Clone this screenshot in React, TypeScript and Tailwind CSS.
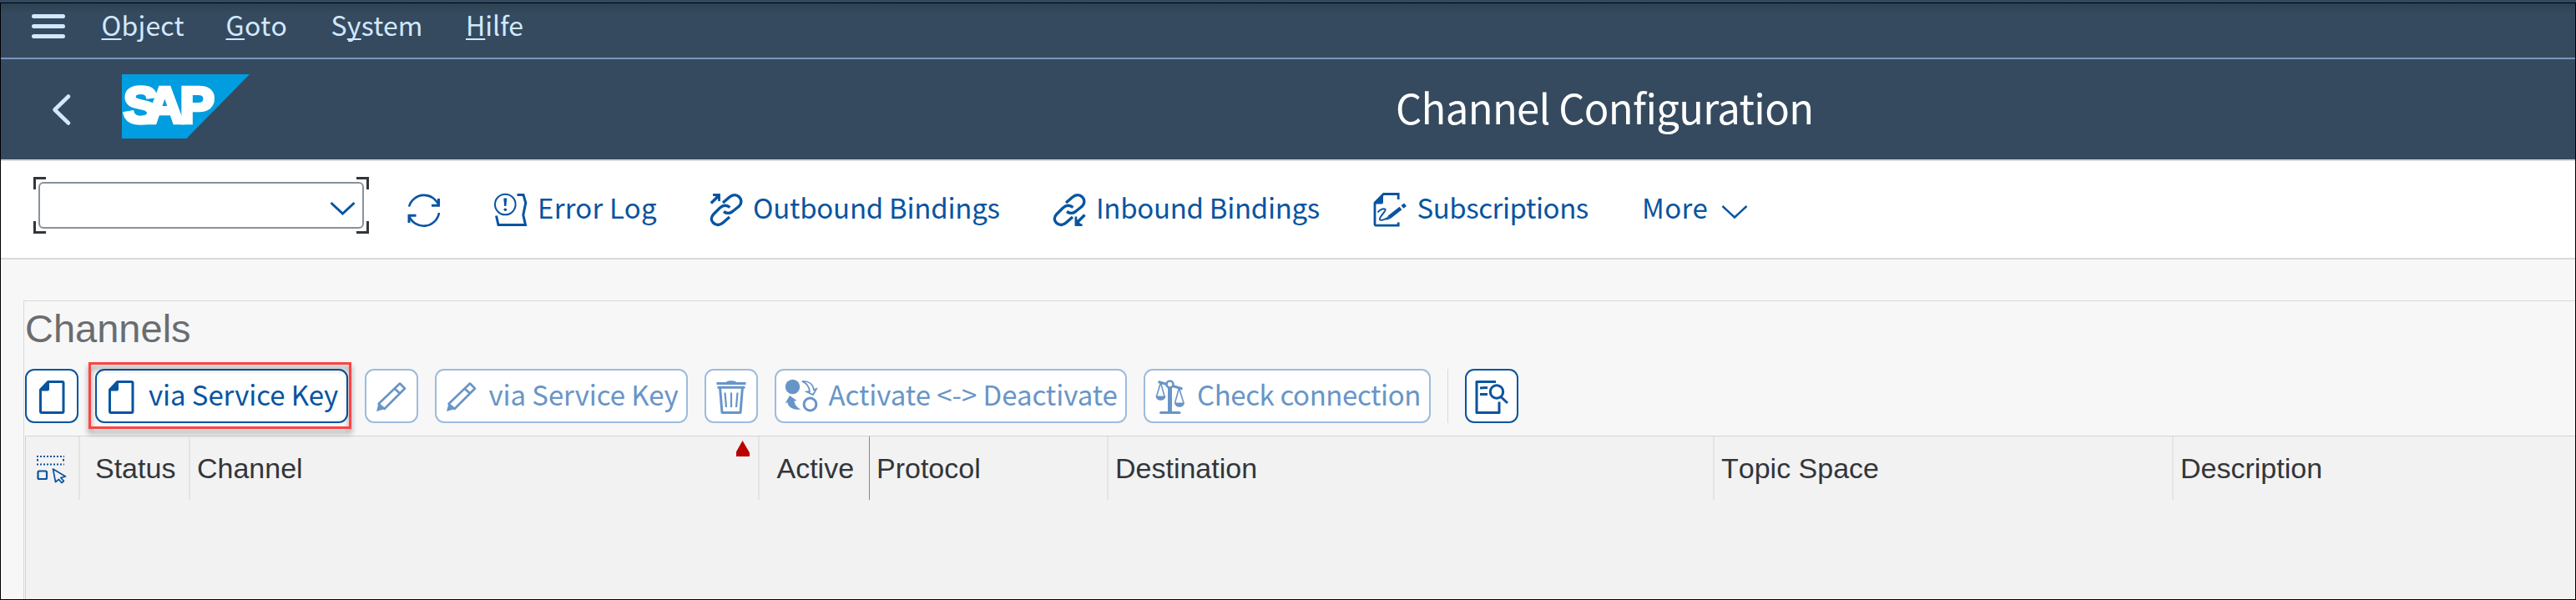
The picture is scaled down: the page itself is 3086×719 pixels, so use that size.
import React from "react";

type Frame = [number, number, number, number];

/* Line drawing on the window's own coordinate grid; `frame` is x, y, width, height. */
function Icon({ frame, children, className = "" }: { frame: Frame; children: React.ReactNode; className?: string }) {
  return (
    <svg
      className={`block shrink-0 ${className}`}
      width={frame[2]}
      height={frame[3]}
      viewBox={frame.join(" ")}
      fill="none"
      stroke="currentColor"
      strokeWidth={3}
    >
      {children}
    </svg>
  );
}

function Menu({ before = "", hot, after, className }: { before?: string; hot: string; after: string; className: string }) {
  return (
    <div className={`h-[50px] shrink-0 whitespace-pre text-[32px] leading-[50px] text-[#d1e8ff] ${className}`}>
      {before}
      <span className="underline decoration-2 underline-offset-[3px] [text-decoration-skip-ink:none]">{hot}</span>
      {after}
    </div>
  );
}

function ToolButton({
  children,
  label,
  className = "",
  dim = false,
  labelClass = "",
}: {
  children: React.ReactNode;
  label?: string;
  className?: string;
  dim?: boolean;
  labelClass?: string;
}) {
  return (
    <button
      className={`relative flex h-[65px] shrink-0 items-center rounded-[11px] border-2 bg-white text-left ${
        dim ? "border-[#9dbcdc] text-[#6895c7]" : "border-[#0854a0] text-[#0854a0]"
      } ${className}`}
    >
      {children}
      {label && (
        <span className={`whitespace-nowrap pb-[5px] text-[33px] leading-[50px] ${labelClass}`}>{label}</span>
      )}
    </button>
  );
}

function Sheet() {
  return (
    <g>
      <path d="M57.5 457.5H74.5Q76 457.5 76 459V493Q76 494.5 74.5 494.5H50Q48.5 494.5 48.5 493V467Z" strokeLinejoin="round" />
      <path d="M47.5 468.5L59 456.5V466.5Q59 468.5 57 468.5Z" fill="currentColor" stroke="none" />
    </g>
  );
}

function Pencil() {
  return (
    <g strokeWidth={2.6}>
      <path d="M479 459.5L485 465.5L460.5 490L453.5 484Z" strokeLinejoin="round" />
      <path d="M472.5 465.5L479 471.5" />
      <path d="M453.5 483.5L461 490L451 493Z" fill="currentColor" stroke="none" />
    </g>
  );
}

function Chain() {
  return (
    <g strokeWidth={3.4}>
      <path d="M1277 243L1284.5 236.5C1289 232.5 1293.5 233 1296.5 236C1299.8 239.3 1299.5 244 1296.5 247L1288.5 253.5C1285 256 1281.5 256 1278 253.5" />
      <path d="M1285.5 248.5C1281.5 245.5 1277 246 1273.5 249L1266 256.5C1262.5 260 1262.5 264 1265.5 267C1269 270.5 1273.5 270 1277 267L1285 260" />
    </g>
  );
}

function Action({ label, className, labelClass = "", children }: { label: string; className: string; labelClass?: string; children?: React.ReactNode }) {
  return (
    <div className={`flex h-[116px] shrink-0 items-center text-[#0854a0] ${className}`}>
      {children}
      <span className={`whitespace-nowrap pb-[6px] text-[33px] leading-[50px] ${labelClass}`}>{label}</span>
    </div>
  );
}

function Column({ label = "", className, children }: { label?: string; className: string; children?: React.ReactNode }) {
  return (
    <div
      className={`relative h-[76px] shrink-0 whitespace-nowrap border-[#e4e4e4] font-['Liberation_Sans',sans-serif] text-[34px] leading-[77px] text-[#32363a] [font-kerning:none] ${className}`}
    >
      {label}
      {children}
    </div>
  );
}

export default function App() {
  return (
    <div className="flex h-[719px] w-[3086px] flex-col overflow-hidden bg-[#2f4963] font-['Noto_Sans_CJK_SC',sans-serif]">
      <div className="h-[3px] shrink-0" />
      <div className="flex min-h-0 flex-1 flex-col border border-black bg-[#f7f7f7]">
        {/* menu bar */}
        <div className="flex h-[67px] shrink-0 items-start border-b-2 border-[#7996b8] bg-[#354a5f] bg-[linear-gradient(#2e4253,#354a5f_12px)]">
          <Icon frame={[1, 4, 120.5, 65]} className="text-[#d1e8ff]">
            <path d="M40.5 19.5H75.5M40.5 31.5H75.5M40.5 43.5H75.5" strokeWidth={5} strokeLinecap="round" />
          </Icon>
          <Menu hot="O" after="bject" className="w-[149px] tracking-[0.2px]" />
          <Menu hot="G" after="oto" className="w-[126px] tracking-[0.5px]" />
          <Menu before="S" hot="y" after="stem" className="w-[161.5px] tracking-[0.2px]" />
          <Menu hot="H" after="ilfe" className="w-[100px]" />
        </div>

        {/* title bar */}
        <div className="flex h-[122px] shrink-0 items-start border-b-2 border-[#d9d9d9] bg-[#354a5f]">
          <Icon frame={[1, 71, 1671, 120]} className="text-[#d1e8ff]">
            <path d="M82 115.5L65.5 131.5L82 147.5" strokeWidth={4.6} strokeLinecap="round" strokeLinejoin="round" />
            <path d="M146 89H299L223.5 166H146Z" fill="#009de0" stroke="none" />
            <g
              fontFamily="Liberation Sans"
              fontWeight="700"
              fontSize="62"
              fill="#fff"
              stroke="#fff"
              strokeWidth="4.5"
              strokeLinejoin="miter"
            >
              <text x="148 175 215.5" y="147">
                SAP
              </text>
            </g>
          </Icon>
          <h1 className="h-[113px] whitespace-nowrap text-[49px] leading-[113px] tracking-[-0.65px] text-white">Channel Configuration</h1>
        </div>

        {/* application toolbar */}
        <div className="flex h-[118px] shrink-0 items-center border-b-2 border-[#d9d9d9] bg-white pl-[39px]">
          <div className="relative mb-[10px] h-[68px] w-[402px] shrink-0 p-[6px]">
            <div className="flex h-[56px] w-[390px] items-center justify-end rounded-[6px] border-2 border-[#89919a] bg-white">
              <Icon frame={[390, 220, 44, 52]} className="text-[#0854a0]">
                <path d="M396.5 243L410.5 256L424.5 243" />
              </Icon>
            </div>
            <i className="absolute left-0 top-0 size-[15px] border-l-[3px] border-t-[3px] border-[#32363a]" />
            <i className="absolute right-0 top-0 size-[15px] border-r-[3px] border-t-[3px] border-[#32363a]" />
            <i className="absolute bottom-0 left-0 size-[15px] border-b-[3px] border-l-[3px] border-[#32363a]" />
            <i className="absolute bottom-0 right-0 size-[15px] border-b-[3px] border-r-[3px] border-[#32363a]" />
          </div>

          <Icon frame={[442, 193, 143, 116]} className="text-[#0854a0]">
            <path d="M490 247.5A18.7 18.7 0 0 1 525.5 246" strokeWidth={2.6} />
            <path d="M526 255A18.7 18.7 0 0 1 490 258.5" strokeWidth={2.6} />
            <path d="M525.5 238V246.2H517M490 267V258.2H498.5" />
          </Icon>

          <Action label="Error Log" className="w-[260px]" labelClass="pl-px tracking-[0.2px]">
            <Icon frame={[585, 193, 58, 116]}>
              <circle cx="605.3" cy="245" r="12.3" strokeWidth={2} />
              <path d="M603.3 237.5h4l-0.9 9.5h-2.2z" fill="currentColor" stroke="none" />
              <circle cx="605.3" cy="251.3" r="1.8" fill="currentColor" stroke="none" />
              <path d="M619.5 233.5H627L629.8 243L626.8 257.5L629.5 269.5H597L594.5 258.5" />
            </Icon>
          </Action>

          <Action label="Outbound Bindings" className="w-[410px]" labelClass="tracking-[-0.25px]">
            <Icon frame={[845, 193, 57, 116]}>
              <g transform="translate(-411 0)">
                <Chain />
              </g>
              <path d="M851.8 243.5L860 235.5" strokeWidth={3.4} />
              <path d="M854 232.3H862.8V241.5L859.5 237.8L857.8 236Z" fill="currentColor" stroke="none" />
              <path d="M854 233.6H861.5V241" strokeWidth={2.6} />
            </Icon>
          </Action>

          <Action label="Inbound Bindings" className="w-[385px]" labelClass="tracking-[-0.3px]">
            <Icon frame={[1255, 193, 58, 116]}>
              <Chain />
              <path d="M1299.5 257.5L1290.5 266.5" strokeWidth={3.4} />
              <path d="M1287.8 260V270.8H1297L1293.5 267L1292 265Z" fill="currentColor" stroke="none" />
              <path d="M1289 259.5V269.5H1296.5" strokeWidth={2.6} />
            </Icon>
          </Action>

          <Action label="Subscriptions" className="w-[326px]" labelClass="tracking-[-0.45px]">
            <Icon frame={[1640, 193, 57.5, 116]}>
              <path d="M1675.2 239V232.5H1657.5L1647 243V268.5Q1647 270.2 1649 270.2H1675.2V266.5" strokeWidth={2.8} />
              <path d="M1646 244.5L1657 231.5V242.5Q1657 244.5 1655 244.5Z" fill="currentColor" stroke="none" />
              <path d="M1664 260.5L1678 249.5" strokeWidth={4.6} />
              <path d="M1680 248L1683.5 245.2" strokeWidth={4.6} />
              <path d="M1660.5 264L1662 259L1665.5 262Z" fill="currentColor" stroke="none" />
              <path d="M1650.5 254.5C1653 251 1657.5 249.5 1659.5 250.8C1661.5 252.5 1652 259.5 1653 262.8C1653.8 265 1658 263 1661.5 261.5" strokeWidth={2} />
            </Icon>
          </Action>

          <Action label="More" className="w-[90px]" labelClass="pl-px tracking-[0.4px]" />
          <Icon frame={[2056, 193, 44, 116]} className="text-[#0854a0]">
            <path d="M2063.5 247L2078 260.5L2092.5 247" strokeWidth={2.4} />
          </Icon>
        </div>

        {/* channel list */}
        <div className="flex min-h-0 flex-1 flex-col pl-[27px] pt-[49px]">
          <section className="flex min-h-0 flex-1 flex-col border-l border-t border-[#d9d9d9]">
            <h2 className="h-[81px] shrink-0 pl-px font-['Liberation_Sans',sans-serif] text-[47px] leading-[66px] text-[#6a6d70]">Channels</h2>

            <div className="flex shrink-0 gap-5 pb-[15px] pl-px">
              <ToolButton className="w-[64px]">
                <Icon frame={[32, 444, 60, 61]}>
                  <Sheet />
                </Icon>
              </ToolButton>
              <ToolButton label="via Service Key" className="w-[303px]" labelClass="pl-[2px] tracking-[-0.1px]">
                <Icon frame={[33, 444, 60, 61]}>
                  <Sheet />
                </Icon>
                <i className="absolute -left-[10px] -top-[10px] h-[80px] w-[315px] border-[3px] border-[#ff4343] drop-shadow-[0_5px_3px_rgba(0,0,0,0.45)]" />
              </ToolButton>
              <ToolButton dim className="w-[64px]">
                <Icon frame={[439, 444, 60, 61]}>
                  <Pencil />
                </Icon>
              </ToolButton>
              <ToolButton dim label="via Service Key" className="w-[303px]" labelClass="pl-[2.5px] tracking-[-0.1px]">
                <Icon frame={[439, 444, 60, 61]}>
                  <Pencil />
                </Icon>
              </ToolButton>
              <ToolButton dim className="w-[64px]">
                <Icon frame={[846, 444, 60, 61]}>
                  <path d="M858.5 459.5H893.5" />
                  <path d="M870 458C870 455.5 882 455.5 882 458Z" fill="currentColor" stroke="none" />
                  <path d="M859.5 464.3H892.5" />
                  <path d="M862.5 464L865 494.5H887L889.5 464" strokeLinejoin="round" />
                  <path d="M868.5 470.5L870 488M876 470.5V488M883.5 470.5L882 488" strokeWidth={2.2} />
                </Icon>
              </ToolButton>
              <ToolButton dim label="Activate &lt;-&gt; Deactivate" className="w-[422px]" labelClass="pl-[2.5px] tracking-[-0.05px]">
                <Icon frame={[930, 444, 60, 61]}>
                  <circle cx="949.5" cy="463.5" r="8.7" fill="currentColor" stroke="none" />
                  <circle cx="970.5" cy="484.5" r="7.4" />
                  <path d="M961 457C969 456.5 974 460.5 975 467L978 466L974 473L966.5 469.5L970 469C969.5 463 966.5 459.5 961 457Z" strokeWidth={1.8} />
                  <path d="M946 474L954.5 480L951.5 480.8C952 485 955 488.5 959.5 490.8C949 491.5 943.5 487 943.5 482L940.5 483.5Z" fill="currentColor" stroke="none" />
                </Icon>
              </ToolButton>
              <ToolButton dim label="Check connection" className="w-[344px]" labelClass="pl-[2px] tracking-[-0.4px]">
                <Icon frame={[1372, 444, 60, 61]}>
                  <circle cx="1401.5" cy="460.5" r="4" strokeWidth={2.6} />
                  <path d="M1401.5 464V494" strokeWidth={5} />
                  <path d="M1390.5 494.5H1413" strokeLinecap="round" />
                  <path d="M1387.5 457.5L1398 460.5M1405 462.5L1416.5 466" />
                  <path d="M1390.5 458.5L1385.5 475M1390.5 458.5L1395 475M1412.5 465L1407.5 483M1412.5 465L1418 483" strokeWidth={1.6} />
                  <path d="M1384.5 474.5H1396.5C1396 481.5 1385 481.5 1384.5 474.5ZM1407 482.5H1419C1418.5 489.5 1407.5 489.5 1407 482.5Z" fill="currentColor" stroke="none" />
                </Icon>
              </ToolButton>
              <div className="w-px shrink-0 bg-[#d9d9d9]" />
              <ToolButton className="w-[64px]">
                <Icon frame={[1757, 444, 60, 61]}>
                  <path d="M1792 457.5H1769V494.5H1796V481.5" strokeLinejoin="round" />
                  <path d="M1773 465L1782 464.5M1773 472.5H1782" />
                  <circle cx="1793" cy="469.5" r="7.7" />
                  <path d="M1798 475.5L1806 483" />
                </Icon>
              </ToolButton>
            </div>

            <div className="ml-px min-h-0 flex-1 border-l border-t border-[#d4d4d4] bg-[#f2f2f2]">
              <div className="flex">
                <Column className="w-[65px] border-r-2">
                  <Icon frame={[31, 523, 63, 76]} className="text-[#0854a0]">
                    <path d="M44 547H77M44 556.5H77" strokeWidth={2} strokeDasharray="2 2" />
                    <path d="M45 550V552.5M76 550V552.5" strokeWidth={2} />
                    <rect x="45.5" y="564.5" width="10.5" height="9.5" rx="1.5" strokeWidth={2.2} />
                    <path d="M63.5 562L78.5 571L72.8 572.5L76.5 576.5L73.8 578.5L70.5 574.5L66.5 577.5Z" strokeWidth={1.7} strokeLinejoin="round" />
                  </Icon>
                </Column>
                <Column label="Status" className="w-[132px] border-r-2 pl-[18px]" />
                <Column label="Channel" className="w-[682px] border-r-2 pl-[8px]">
                  <svg className="absolute right-[10px] top-[5px]" width="16" height="19" viewBox="0 0 16 19">
                    <path d="M7.5 0L16 14.5V19H0V13.5Z" fill="#bb0000" />
                  </svg>
                </Column>
                <Column label="Active" className="w-[132px] border-r border-r-[#868686] pl-[20.5px]" />
                <Column label="Protocol" className="w-[286px] border-r-2 pl-[8px]" />
                <Column label="Destination" className="w-[726px] border-r-2 pl-[8px]" />
                <Column label="Topic Space" className="w-[550px] border-r-2 pl-[8px]" />
                <Column label="Description" className="w-[481px] pl-[8px]" />
              </div>
            </div>
          </section>
        </div>
      </div>
    </div>
  );
}
